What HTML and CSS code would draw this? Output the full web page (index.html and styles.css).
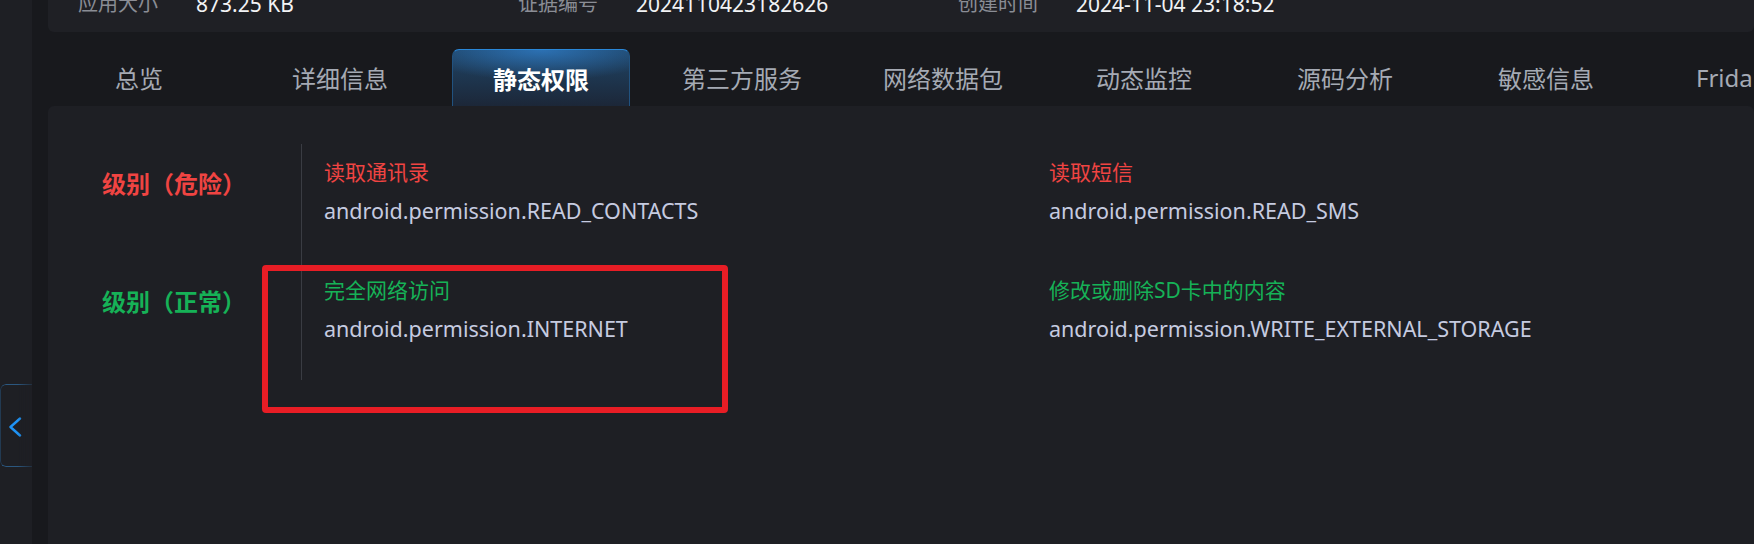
FILE: index.html
```html
<!DOCTYPE html>
<html lang="zh-CN">
<head>
<meta charset="utf-8">
<title>静态权限</title>
<link rel="stylesheet" href="styles.css">
</head>
<body>
<div class="app">
  <aside class="sidebar">
    <button class="collapse-btn" type="button" aria-label="收起">
      <svg width="14" height="20" viewBox="0 0 14 20"><polyline points="12,1.5 2.5,10 12,18.5" fill="none" stroke="#1f93f5" stroke-width="2.4" stroke-linecap="round" stroke-linejoin="round"/></svg>
    </button>
  </aside>
  <div class="gutter"></div>
  <main class="main">
    <section class="info-card">
      <div class="info-item"><span class="info-label">应用大小</span><span class="info-value">873.25 KB</span></div>
      <div class="info-item"><span class="info-label">证据编号</span><span class="info-value">2024110423182626</span></div>
      <div class="info-item"><span class="info-label">创建时间</span><span class="info-value">2024-11-04 23:18:52</span></div>
    </section>
    <nav class="tabs">
      <div class="tab">总览</div>
      <div class="tab">详细信息</div>
      <div class="tab active">静态权限</div>
      <div class="tab">第三方服务</div>
      <div class="tab">网络数据包</div>
      <div class="tab">动态监控</div>
      <div class="tab">源码分析</div>
      <div class="tab">敏感信息</div>
      <div class="tab tab-last">Frida</div>
    </nav>
    <section class="content">
      <div class="levels">
        <div class="level-label danger">级别（危险）</div>
        <div class="level-items">
          <div class="perm">
            <div class="perm-title danger">读取通讯录</div>
            <div class="perm-name">android.permission.READ_CONTACTS</div>
          </div>
          <div class="perm">
            <div class="perm-title danger">读取短信</div>
            <div class="perm-name">android.permission.READ_SMS</div>
          </div>
        </div>
        <div class="level-label normal">级别（正常）</div>
        <div class="level-items last">
          <div class="perm">
            <div class="perm-title normal">完全网络访问</div>
            <div class="perm-name">android.permission.INTERNET</div>
          </div>
          <div class="perm">
            <div class="perm-title normal">修改或删除SD卡中的内容</div>
            <div class="perm-name">android.permission.WRITE_EXTERNAL_STORAGE</div>
          </div>
        </div>
      </div>
    </section>
  </main>
  <div class="highlight-box"></div>
</div>
</body>
</html>
```

FILE: styles.css
```css
* { box-sizing: border-box; }
html, body {
  margin: 0;
  padding: 0;
  background: #1e1f24;
  font-family: "Noto Sans", "Noto Sans CJK SC", sans-serif;
}
.app {
  position: relative;
  display: flex;
  width: 1754px;
  height: 544px;
  overflow: hidden;
}
.sidebar {
  position: relative;
  width: 32px;
  flex-shrink: 0;
  background: #1e1f24;
}
.collapse-btn {
  position: absolute;
  left: 0;
  top: 384px;
  width: 32px;
  height: 83px;
  padding: 0;
  background: #1e1f24;
  border: 1px solid #2b577f;
  border-left-color: #223a52;
  border-right: none;
  border-radius: 6px 0 0 6px;
  cursor: pointer;
  -webkit-mask-image: linear-gradient(to right, #000 55%, rgba(0,0,0,0.3));
  mask-image: linear-gradient(to right, #000 55%, rgba(0,0,0,0.3));
}
.collapse-btn svg {
  position: absolute;
  left: 7px;
  top: 32px;
}
.gutter {
  width: 16px;
  flex-shrink: 0;
  background: #18191d;
}
.main {
  flex: 1;
  min-width: 0;
  display: flex;
  flex-direction: column;
  background: #18191d;
}
.info-card {
  display: flex;
  margin-top: -40px;
  padding: 30px 0 14px 30px;
  background: #1f2025;
  border-radius: 0 0 6px 6px;
}
.info-item {
  display: flex;
  width: 440px;
  flex-shrink: 0;
  font-size: 20px;
  line-height: 28px;
}
.info-label {
  width: 118px;
  color: #8a8d95;
}
.info-value {
  color: #f2f3f5;
  font-size: 21px;
}
.tabs {
  display: flex;
  align-items: flex-end;
  gap: 23px;
  height: 74px;
  padding-left: 2px;
  overflow: hidden;
}
.tab {
  flex-shrink: 0;
  width: 178px;
  height: 57px;
  display: flex;
  align-items: center;
  justify-content: center;
  font-size: 24px;
  color: #a5aab4;
  white-space: nowrap;
}
.tab.tab-last {
  justify-content: flex-start;
  padding-left: 38px;
}
.tab.active {
  color: #ffffff;
  font-weight: 700;
  border: 1px solid #2a87d8;
  border-bottom: none;
  border-radius: 7px 7px 0 0;
  background:
    radial-gradient(ellipse 70% 55% at 50% 0%, rgba(48,128,205,0.75), rgba(48,128,205,0) 100%),
    linear-gradient(to bottom, #1f4466, #1c2738);
  border-left-color: #21527f;
  border-right-color: #21527f;
}
.content {
  flex: 1;
  background: #1e1f24;
  border-radius: 6px 6px 0 0;
  padding: 38px 0 0 54px;
}
.levels {
  display: grid;
  grid-template-columns: 199px 1fr;
}
.level-label {
  padding-top: 26px;
  font-size: 24px;
  line-height: 28px;
  font-weight: 700;
}
.danger { color: #f04442; }
.normal { color: #16b257; }
.level-items {
  display: grid;
  grid-template-columns: 725px 1fr;
  height: 118px;
  padding: 14px 0 0 22px;
  border-left: 1px solid #3a3c43;
}
.level-items.last {
  height: 118px;
}
.perm-title {
  font-size: 21px;
  line-height: 28px;
}
.perm-name {
  margin-top: 11px;
  font-size: 21.5px;
  line-height: 28px;
  color: #c6cbe0;
}
.highlight-box {
  position: absolute;
  left: 262px;
  top: 265px;
  width: 466px;
  height: 148px;
  border: 6px solid #e81d25;
  border-radius: 4px;
  pointer-events: none;
}
```
